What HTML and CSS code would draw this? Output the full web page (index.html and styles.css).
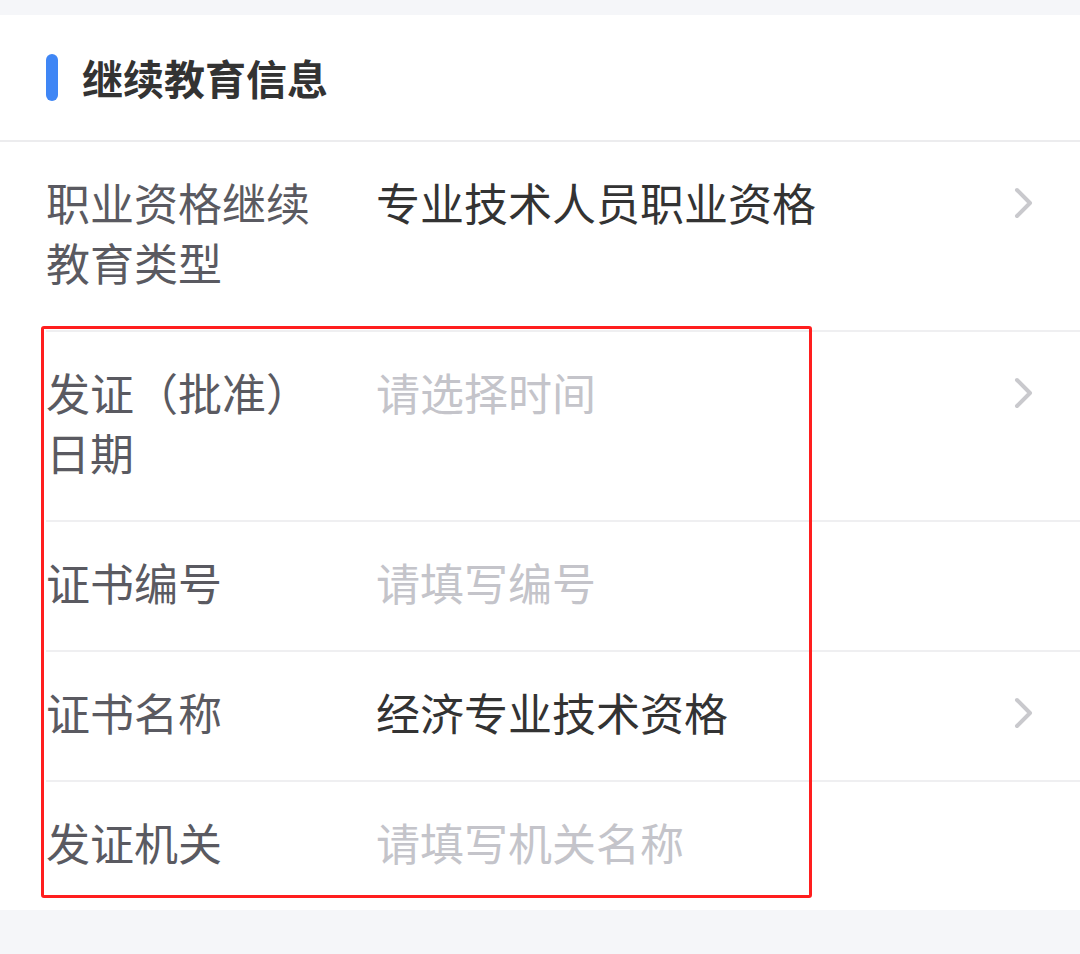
FILE: index.html
```html
<!DOCTYPE html>
<html lang="zh-CN">
<head>
<meta charset="utf-8">
<title>继续教育信息</title>
<link rel="stylesheet" href="styles.css">
</head>
<body>
<div class="page">
  <section class="card">
    <header class="card-head">
      <span class="accent"></span>
      <h2 class="title">继续教育信息</h2>
    </header>
    <div class="list">
      <div class="row">
        <div class="label">职业资格继续教育类型</div>
        <div class="value">专业技术人员职业资格</div>
        <svg class="chev" viewBox="0 0 20 32" width="20" height="32"><polyline points="3,3 16,16 3,29" fill="none" stroke="#c9c9cd" stroke-width="4" stroke-linecap="round" stroke-linejoin="round"/></svg>
      </div>
      <div class="row">
        <div class="label">发证（批准）日期</div>
        <div class="value placeholder">请选择时间</div>
        <svg class="chev" viewBox="0 0 20 32" width="20" height="32"><polyline points="3,3 16,16 3,29" fill="none" stroke="#c9c9cd" stroke-width="4" stroke-linecap="round" stroke-linejoin="round"/></svg>
      </div>
      <div class="row">
        <div class="label">证书编号</div>
        <div class="value placeholder">请填写编号</div>
      </div>
      <div class="row">
        <div class="label">证书名称</div>
        <div class="value">经济专业技术资格</div>
        <svg class="chev" viewBox="0 0 20 32" width="20" height="32"><polyline points="3,3 16,16 3,29" fill="none" stroke="#c9c9cd" stroke-width="4" stroke-linecap="round" stroke-linejoin="round"/></svg>
      </div>
      <div class="row">
        <div class="label">发证机关</div>
        <div class="value placeholder">请填写机关名称</div>
      </div>
    </div>
    <div class="highlight"></div>
  </section>
</div>
</body>
</html>
```
FILE: styles.css
```css
html, body {
  margin: 0;
  padding: 0;
}
body {
  background: #f5f6f9;
  font-family: "Noto Sans CJK SC", "Noto Sans", sans-serif;
}
.page {
  padding-top: 15px;
  min-height: 939px;
}
.card {
  position: relative;
  background: #ffffff;
}
.card-head {
  height: 125px;
  display: flex;
  align-items: center;
  padding-left: 46px;
  border-bottom: 2px solid #ececee;
}
.accent {
  width: 12px;
  height: 47px;
  border-radius: 6px;
  background: #3f86f5;
  margin-right: 24px;
}
.title {
  margin: 0;
  font-size: 41px;
  font-weight: 700;
  color: #333333;
  line-height: 1;
}
.list {
  padding-left: 46px;
}
.row {
  display: grid;
  grid-template-columns: 270px 1fr 20px;
  column-gap: 60px;
  align-items: start;
  padding: 30px 46px 38px 0;
  font-size: 44px;
  line-height: 60px;
}
.row + .row {
  border-top: 2px solid #efeff1;
}
.label {
  color: #5a5a61;
}
.value {
  color: #333333;
  grid-column: 2;
}
.placeholder {
  color: #c4c4ca;
}
.chev {
  grid-column: 3;
  margin-top: 15px;
  display: block;
}
.highlight {
  position: absolute;
  left: 41px;
  top: 311px;
  width: 765px;
  height: 566px;
  border: 3px solid #ff1e1e;
  border-radius: 3px;
  pointer-events: none;
}
```
